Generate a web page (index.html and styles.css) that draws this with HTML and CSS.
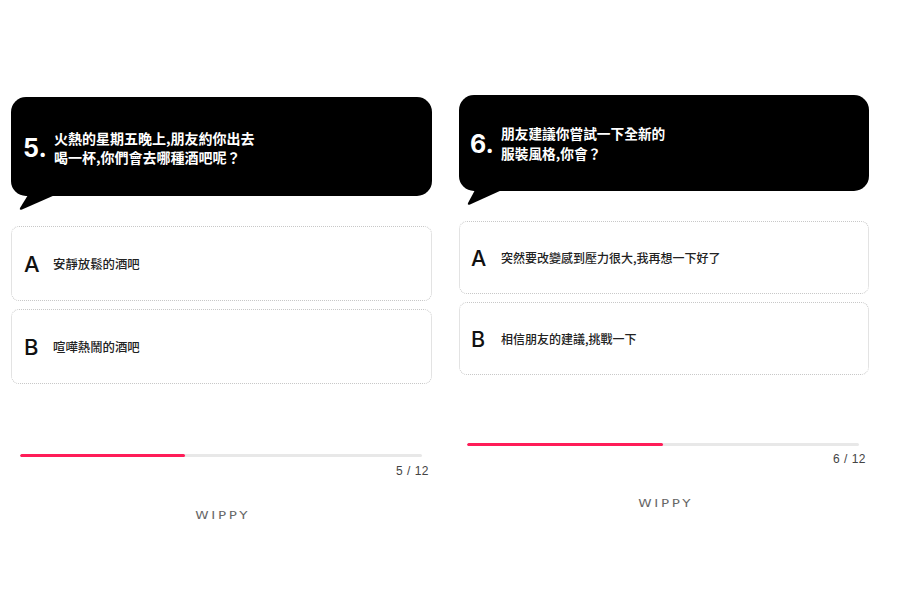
FILE: index.html
```html
<!DOCTYPE html>
<html lang="zh-Hant">
<head>
<meta charset="utf-8">
<title>WIPPY Quiz</title>
<link rel="stylesheet" href="styles.css">
</head>
<body>
<div class="page">
  <section class="panel panel-left">
    <div class="bubble">
      <div class="q-num">5.</div>
      <div class="q-text">火熱的星期五晚上,朋友約你出去<br>喝一杯,你們會去哪種酒吧呢？</div>
      <svg class="tail" width="48" height="16" viewBox="0 0 48 16"><path d="M17 0 L44 0 L11 14.5 Q8 15.5 9 13 Z" fill="#000"/></svg>
    </div>
    <div class="options">
      <div class="option"><span class="opt-letter">A</span><span class="opt-text">安靜放鬆的酒吧</span></div>
      <div class="option"><span class="opt-letter">B</span><span class="opt-text">喧嘩熱鬧的酒吧</span></div>
    </div>
    <div class="progress"><div class="progress-fill" style="width: 41%"></div></div>
    <div class="count">5 / 12</div>
    <div class="brand"><span class="brand-word">WIPPY</span></div>
  </section>
  <section class="panel panel-right">
    <div class="bubble">
      <div class="q-num">6.</div>
      <div class="q-text">朋友建議你嘗試一下全新的<br>服裝風格,你會？</div>
      <svg class="tail" width="48" height="16" viewBox="0 0 48 16"><path d="M16 0 L43 0 L11 14.5 Q8 15.5 9 13 Z" fill="#000"/></svg>
    </div>
    <div class="options">
      <div class="option"><span class="opt-letter">A</span><span class="opt-text">突然要改變感到壓力很大,我再想一下好了</span></div>
      <div class="option"><span class="opt-letter">B</span><span class="opt-text">相信朋友的建議,挑戰一下</span></div>
    </div>
    <div class="progress"><div class="progress-fill" style="width: 50%"></div></div>
    <div class="count">6 / 12</div>
    <div class="brand"><span class="brand-word">WIPPY</span></div>
  </section>
</div>
</body>
</html>
```
FILE: styles.css
```css
* { box-sizing: border-box; }
html, body { margin: 0; padding: 0; background: #fff; }
body {
  font-family: "Liberation Sans", "Noto Sans CJK TC", sans-serif;
  color: #111;
  width: 900px;
  height: 600px;
  overflow: hidden;
}
.page {
  display: flex;
  gap: 27px;
  padding-left: 11px;
}
.panel { display: flex; flex-direction: column; }
.panel-left { width: 421px; padding-top: 97px; }
.panel-right { width: 410px; padding-top: 95px; }

.bubble {
  position: relative;
  background: #000;
  color: #fff;
  border-radius: 15px;
  display: flex;
  align-items: center;
  padding-left: 12px;
}
.panel-left .bubble { height: 99px; }
.panel-right .bubble { height: 96px; padding-left: 11px; }

.q-num {
  font-family: "Inter", "Liberation Sans", sans-serif;
  font-weight: 700;
  font-size: 25px;
  width: 31px;
  flex: none;
  padding-top: 2px;
}
.q-text {
  font-weight: 700;
  font-size: 14px;
  line-height: 19px;
  font-family: "Noto Sans CJK TC", sans-serif;
  padding-top: 2px;
}
.panel-right .q-text { font-size: 13.7px; line-height: 20px; padding-top: 0; }

.tail {
  position: absolute;
  left: 0;
  top: 100%;
  margin-top: -1px;
}

.options { display: flex; flex-direction: column; gap: 8px; }
.panel-left .options { margin-top: 30px; }
.panel-right .options { margin-top: 30px; }

.option {
  border: 1px dotted #c8c8c8;
  border-radius: 8px;
  display: flex;
  align-items: center;
  padding-left: 12px;
}
.panel-left .option { height: 75px; }
.panel-right .option { height: 73px; padding-left: 11px; }

.opt-letter {
  font-family: "Inter", "Liberation Sans", sans-serif;
  font-weight: 500;
  font-size: 22px;
  width: 29px;
  flex: none;
  color: #111;
}
.panel-right .opt-letter { font-size: 21.5px; width: 30px; }
.opt-text {
  font-family: "Noto Sans CJK TC", sans-serif;
  font-size: 12.4px;
  font-weight: 500;
  color: #222;
}
.panel-right .opt-text { font-size: 12px; }

.progress {
  height: 3px;
  background: #e8e8e8;
  border-radius: 2px;
  overflow: hidden;
}
.panel-left .progress { margin: 70px 10px 0 9px; }
.panel-right .progress { margin: 68px 10px 0 8px; }
.progress-fill {
  height: 100%;
  background: #ff1d58;
  border-radius: 2px;
}

.count {
  text-align: right;
  font-family: "Liberation Sans", sans-serif;
  font-size: 12px;
  line-height: 14px;
  letter-spacing: 0.5px;
  color: #444;
  padding-right: 3px;
}
.panel-left .count { margin-top: 7px; }
.panel-right .count { margin-top: 6px; }

.brand {
  display: flex;
  justify-content: center;
  line-height: 14px;
}
.brand-word {
  display: inline-block;
  font-family: "DejaVu Sans", sans-serif;
  font-size: 10px;
  letter-spacing: 2px;
  padding-left: 2px;
  color: #666;
  transform: scaleX(1.35);
}
.panel-left .brand { margin-top: 31px; }
.panel-right .brand { margin-top: 31px; }
```
